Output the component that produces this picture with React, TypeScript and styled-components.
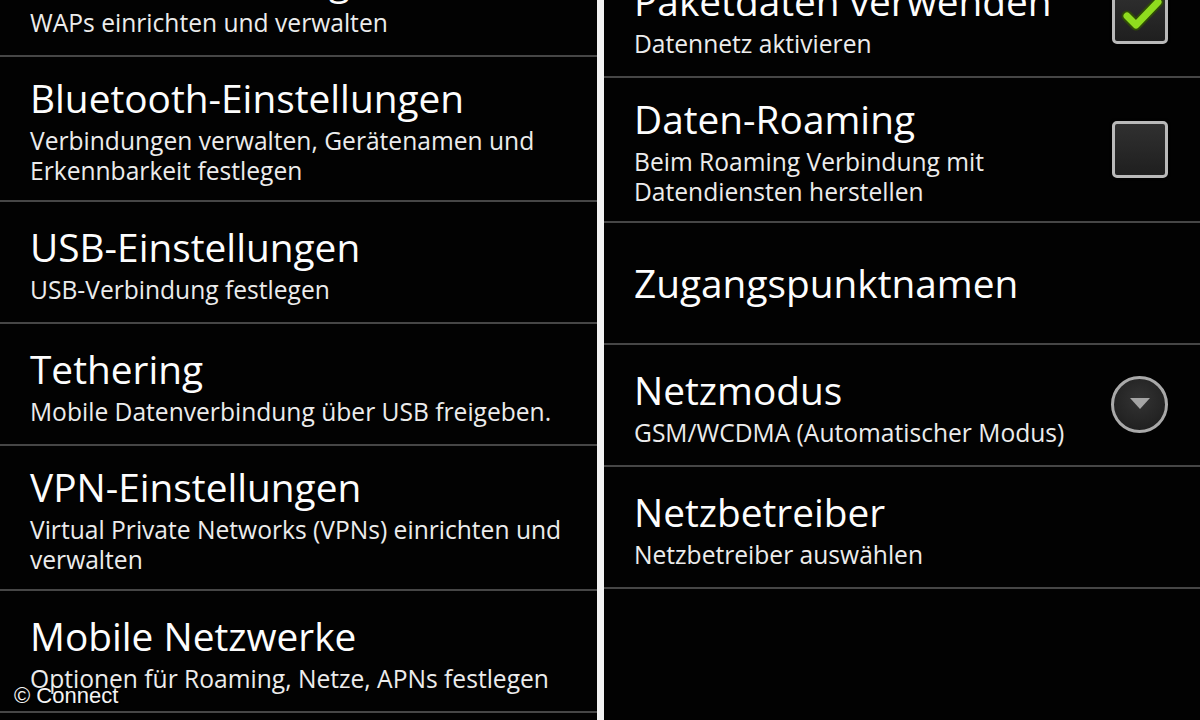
import { createGlobalStyle } from "styled-components";
import styled from "styled-components";

type Widget = "checked" | "unchecked" | "dropdown";

type Pref = {
  title: string;
  summary?: string;
  widget?: Widget;
};

const LEFT_PREFS: Pref[] = [
  { title: "WLAN-Einstellungen", summary: "WAPs einrichten und verwalten" },
  {
    title: "Bluetooth-Einstellungen",
    summary: "Verbindungen verwalten, Gerätenamen und\nErkennbarkeit festlegen",
  },
  { title: "USB-Einstellungen", summary: "USB-Verbindung festlegen" },
  { title: "Tethering", summary: "Mobile Datenverbindung über USB freigeben." },
  {
    title: "VPN-Einstellungen",
    summary: "Virtual Private Networks (VPNs) einrichten und\nverwalten",
  },
  { title: "Mobile Netzwerke", summary: "Optionen für Roaming, Netze, APNs festlegen" },
];

const RIGHT_PREFS: Pref[] = [
  { title: "Paketdaten verwenden", summary: "Datennetz aktivieren", widget: "checked" },
  {
    title: "Daten-Roaming",
    summary: "Beim Roaming Verbindung mit\nDatendiensten herstellen",
    widget: "unchecked",
  },
  { title: "Zugangspunktnamen" },
  { title: "Netzmodus", summary: "GSM/WCDMA (Automatischer Modus)", widget: "dropdown" },
  { title: "Netzbetreiber", summary: "Netzbetreiber auswählen" },
];

const GlobalStyle = createGlobalStyle`
  html, body {
    margin: 0;
    padding: 0;
    background: #000;
  }
  body {
    font-family: "Open Sans", "Noto Sans", "DejaVu Sans", sans-serif;
    color: #fff;
  }
`;

const Screen = styled.div`
  position: relative;
  display: flex;
  width: 1200px;
  height: 720px;
  overflow: hidden;
  background: #000;
`;

const Panel = styled.div<{ $width?: number }>`
  flex: ${(p) => (p.$width ? `0 0 ${p.$width}px` : "1")};
  height: 100%;
  overflow: hidden;
  background: #020202;
`;

// the list is scrolled, so part of the first row sits above the top edge
const List = styled.div<{ $scroll: number }>`
  display: flex;
  flex-direction: column;
  margin-top: -${(p) => p.$scroll}px;
`;

const Gutter = styled.div`
  flex: 0 0 7px;
  background: #f2f2f2;
`;

const Row = styled.div`
  display: flex;
  align-items: center;
  gap: 20px;
  box-sizing: border-box;
  min-height: 122px;
  padding: 13px 32px 14px 30px;
  border-bottom: 2px solid #464646;
`;

const Texts = styled.div`
  flex: 1;
  min-width: 0;
`;

const Title = styled.div`
  font-size: 38.8px;
  line-height: 56px;
  color: #fdfdfd;
  white-space: nowrap;
`;

const Summary = styled.div`
  font-size: 24.6px;
  line-height: 30px;
  color: #ececec;
  white-space: pre;
`;

const CheckBox = styled.div`
  position: relative;
  flex: 0 0 auto;
  box-sizing: border-box;
  width: 56px;
  height: 57px;
  border: 3px solid #b9b9b9;
  border-radius: 5px;
  background: linear-gradient(#303030, #1f1f1f);
  box-shadow: 0 0 3px rgba(0, 0, 0, 0.9);
  svg {
    position: absolute;
    left: -3px;
    top: -3px;
    overflow: visible;
  }
`;

const Spinner = styled.div`
  flex: 0 0 auto;
  display: flex;
  align-items: center;
  justify-content: center;
  box-sizing: border-box;
  width: 57px;
  height: 57px;
  padding-bottom: 2px;
  border: 3px solid #a9a9a9;
  border-radius: 50%;
  background: radial-gradient(circle at 50% 40%, #333 0%, #222 70%, #1a1a1a 100%);
`;

const Watermark = styled.div`
  position: absolute;
  left: 14px;
  bottom: 13px;
  font-family: "Liberation Sans", Arial, sans-serif;
  font-size: 22px;
  line-height: 22px;
  color: #f4f4f4;
  text-shadow: 0 0 2px rgba(0, 0, 0, 0.8);
`;

const CheckMark = () => (
  <svg width="56" height="57" viewBox="0 0 56 57">
    <path
      d="M15 29 L24 38 L46 15"
      fill="none"
      stroke="#2f4a08"
      strokeWidth="11"
      strokeLinejoin="round"
      strokeLinecap="round"
    />
    <path
      d="M15 29 L24 38 L46 15"
      fill="none"
      stroke="#8fdc1e"
      strokeWidth="7"
      strokeLinejoin="round"
      strokeLinecap="round"
    />
  </svg>
);

const PrefWidget = ({ type }: { type: Widget }) => {
  if (type === "dropdown") {
    return (
      <Spinner>
        <svg width="22" height="14" viewBox="0 0 22 14">
          <path d="M1 1 L21 1 L11 12 Z" fill="#a4a4a4" />
        </svg>
      </Spinner>
    );
  }
  return <CheckBox>{type === "checked" && <CheckMark />}</CheckBox>;
};

const PrefList = ({ prefs, scroll }: { prefs: Pref[]; scroll: number }) => (
  <List $scroll={scroll}>
    {prefs.map((pref) => (
      <Row key={pref.title}>
        <Texts>
          <Title>{pref.title}</Title>
          {pref.summary && <Summary>{pref.summary}</Summary>}
        </Texts>
        {pref.widget && <PrefWidget type={pref.widget} />}
      </Row>
    ))}
  </List>
);

const App = () => {
  return (
    <>
      <GlobalStyle />
      <Screen>
        <Panel $width={597}>
          <PrefList prefs={LEFT_PREFS} scroll={65} />
        </Panel>
        <Gutter />
        <Panel>
          <PrefList prefs={RIGHT_PREFS} scroll={44} />
        </Panel>
        <Watermark>© Connect</Watermark>
      </Screen>
    </>
  );
};

export default App;
